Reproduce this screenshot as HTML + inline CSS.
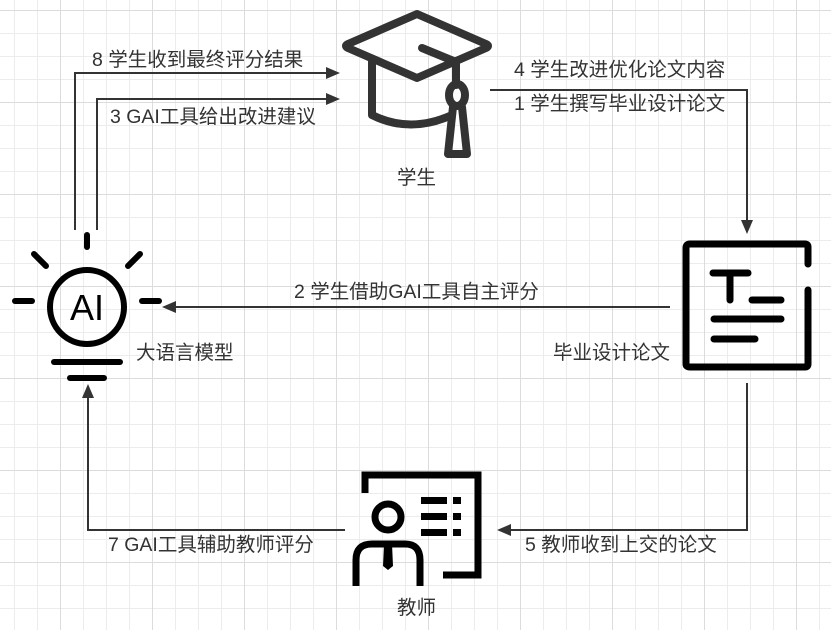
<!DOCTYPE html>
<html><head><meta charset="utf-8"><style>
html,body{margin:0;padding:0;}
body{width:831px;height:630px;overflow:hidden;background:#fff;position:relative;font-family:"Liberation Sans","Noto Sans CJK SC",sans-serif;}
.bg{position:absolute;left:0;top:0;width:831px;height:630px;
background-image:
linear-gradient(to right,#dcdcdc 1px,transparent 1px),
linear-gradient(to bottom,#dcdcdc 1px,transparent 1px),
linear-gradient(to right,#ececec 1px,transparent 1px),
linear-gradient(to bottom,#ececec 1px,transparent 1px);
background-size:92px 92px,92px 92px,23px 23px,23px 23px;
background-position:60px 10px,60px 10px,14px 10px,14px 10px;}
.t{position:absolute;font-size:19.5px;color:#333;white-space:nowrap;line-height:22px;}
svg{position:absolute;left:0;top:0;}
</style></head><body>
<div class="bg"></div>
<svg width="831" height="630" viewBox="0 0 831 630">
<g fill="none" stroke="#333" stroke-width="2">
<polyline points="75,230 75,73 328,73"/>
<polyline points="97,230 97,99 328,99"/>
<polyline points="490,90 747,90 747,222"/>
<polyline points="670,307 172,307"/>
<polyline points="747,383 747,530 507,530"/>
<polyline points="345,530 88,530 88,395"/>
</g>
<g fill="#333">
<polygon points="340,73 326,67 326,79"/>
<polygon points="340,99 326,93 326,105"/>
<polygon points="747,234 741,220 753,220"/>
<polygon points="162,307 176,301 176,313"/>
<polygon points="497,530 511,524 511,536"/>
<polygon points="88,384 82,398 94,398"/>
</g>
<g fill="none" stroke="#333" stroke-width="8" stroke-linejoin="round" stroke-linecap="round">
<path d="M417,14 L486,44 Q490,46 486,48 L417,78 L348,48 Q344,46 348,44 Z"/>
<path d="M372,62 V115 Q410,134 452,115"/>
<path d="M422,48 L456,62 V85"/>
<ellipse cx="457" cy="95" rx="8" ry="11"/>
<path d="M453,107 L448,154 H467 L462,107"/>
</g>
<g fill="none" stroke="#000" stroke-width="6" stroke-linecap="round">
<circle cx="87" cy="307" r="37"/>
<line x1="87" y1="235" x2="87" y2="247"/>
<line x1="34" y1="254" x2="46" y2="266"/>
<line x1="140" y1="254" x2="128" y2="266"/>
<line x1="15" y1="301" x2="32" y2="301"/>
<line x1="142" y1="301" x2="159" y2="301"/>
<line x1="54" y1="362" x2="120" y2="362"/>
<line x1="70" y1="378" x2="104" y2="378"/>
</g>
<text x="87" y="320" text-anchor="middle" font-family="Liberation Sans" font-size="36" fill="#000">AI</text>
<g fill="none" stroke="#000" stroke-width="7" stroke-linecap="round" stroke-linejoin="round">
<path d="M808,264 V247 Q808,244 805,244 H690 Q686,244 686,248 V364 Q686,367 690,367 H805 Q808,367 808,364 V290"/>
<line x1="713" y1="273" x2="748" y2="273"/>
<line x1="730" y1="273" x2="730" y2="300"/>
<line x1="752" y1="300" x2="781" y2="300"/>
<line x1="714" y1="319" x2="781" y2="319"/>
<line x1="714" y1="339" x2="755" y2="339"/>
</g>
<g fill="none" stroke="#000" stroke-width="7">
<polyline points="365,493 365,475 478,475 478,575 443,575"/>
<circle cx="388" cy="517" r="13"/>
<path d="M356,586 V560 Q356,544 372,544 H405 Q420,544 420,560 V586"/>
</g>
<polygon points="384,544 392,544 393,566 388,570 383,566" fill="#000"/>
<g fill="#000">
<rect x="421" y="497" width="26" height="7"/><rect x="453" y="497" width="8" height="7"/>
<rect x="421" y="513" width="26" height="7"/><rect x="453" y="513" width="8" height="7"/>
<rect x="421" y="529" width="26" height="7"/><rect x="453" y="529" width="8" height="7"/>
</g>
</svg>
<div class="t" style="left:92px;top:49px;">8 学生收到最终评分结果</div>
<div class="t" style="left:110px;top:106px;">3 GAI工具给出改进建议</div>
<div class="t" style="left:397px;top:167px;">学生</div>
<div class="t" style="left:514px;top:59px;">4 学生改进优化论文内容</div>
<div class="t" style="left:514px;top:93px;">1 学生撰写毕业设计论文</div>
<div class="t" style="left:294px;top:281px;">2 学生借助GAI工具自主评分</div>
<div class="t" style="left:136px;top:342px;">大语言模型</div>
<div class="t" style="left:553px;top:342px;">毕业设计论文</div>
<div class="t" style="left:108px;top:534px;">7 GAI工具辅助教师评分</div>
<div class="t" style="left:525px;top:534px;">5 教师收到上交的论文</div>
<div class="t" style="left:397px;top:597px;">教师</div>
</body></html>
